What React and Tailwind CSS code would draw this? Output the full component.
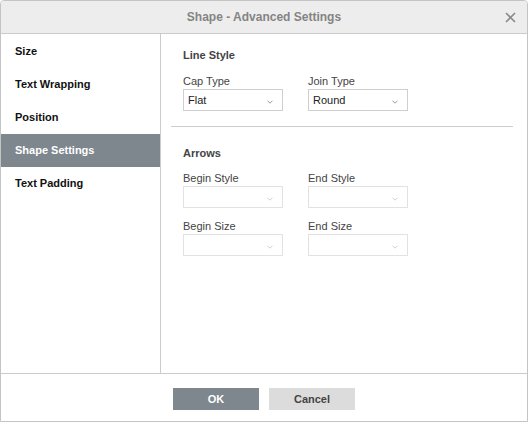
import React from "react";

const Chevron = ({ disabled }) => (
  <svg width="6" height="4" viewBox="0 0 6 4" className="absolute right-[9px] top-[10px]">
    <path d="M0.5 0.7 L3 3.2 L5.5 0.7" fill="none" stroke={disabled ? "#cfcfcf" : "#9a9a9a"} strokeWidth="1" />
  </svg>
);

const Select = ({ value, disabled }) => (
  <div
    className={`relative w-[100px] h-[22px] border bg-white pl-[4px] leading-[20px] text-[11px] ${
      disabled ? "border-[#e2e2e2]" : "border-[#cfcfcf] text-[#222]"
    }`}
  >
    {value}
    <Chevron disabled={disabled} />
  </div>
);

const Field = ({ label, value, disabled, className = "" }) => (
  <div className={`w-[100px] ${className}`}>
    <div className="h-[14px] leading-[14px] text-[11px] text-[#444] mb-[1px]">{label}</div>
    <Select value={value} disabled={disabled} />
  </div>
);

const menu = ["Size", "Text Wrapping", "Position", "Shape Settings", "Text Padding"];

export default function App() {
  return (
    <div
      className="w-[528px] h-[422px] flex flex-col border border-[#c4c4c4] rounded-t-[4px] bg-white overflow-hidden"
      style={{ fontFamily: '"Liberation Sans", Arial, sans-serif' }}
    >
      {/* header */}
      <div className="relative h-[33px] shrink-0 bg-[#ededed] border-b border-[#cbcbcb] flex items-center justify-center">
        <span className="text-[12px] font-bold text-[#848484]">Shape - Advanced Settings</span>
        <svg width="11" height="11" viewBox="0 0 11 11" className="absolute right-[11px] top-[11px]">
          <path d="M1 1 L10 10 M10 1 L1 10" stroke="#8a8a8a" strokeWidth="1.6" />
        </svg>
      </div>

      {/* body */}
      <div className="flex flex-1 min-h-0">
        <div className="w-[160px] shrink-0 border-r border-[#cbcbcb] pt-[1px]">
          {menu.map((item) => (
            <div
              key={item}
              className={`h-[33px] flex items-center pl-[14px] text-[11px] font-bold ${
                item === "Shape Settings" ? "bg-[#7e868e] text-white" : "text-[#111]"
              }`}
            >
              {item}
            </div>
          ))}
        </div>

        <div className="flex-1 pl-[10px] pr-[14px] pt-[14px]">
          <div className="pl-[12px]">
            <div className="h-[14px] leading-[14px] text-[11px] font-bold text-[#444]">Line Style</div>
            <div className="flex gap-[25px] mt-[12px]">
              <Field label="Cap Type" value="Flat" />
              <Field label="Join Type" value="Round" />
            </div>
          </div>

          <div className="mt-[15px] border-t border-[#cdcdcd]"></div>

          <div className="pl-[12px] pt-[19px]">
            <div className="h-[14px] leading-[14px] text-[11px] font-bold text-[#444]">Arrows</div>
            <div className="flex gap-[25px] mt-[11px]">
              <Field label="Begin Style" disabled />
              <Field label="End Style" disabled />
            </div>
            <div className="flex gap-[25px] mt-[11px]">
              <Field label="Begin Size" disabled />
              <Field label="End Size" disabled />
            </div>
          </div>
        </div>
      </div>

      {/* footer */}
      <div className="h-[48px] shrink-0 border-t border-[#cbcbcb] flex justify-center gap-[10px] pt-[14px]">
        <button className="w-[86px] h-[22px] bg-[#7e868e] text-white text-[11px] font-bold">OK</button>
        <button className="w-[86px] h-[22px] bg-[#dcdcdc] text-[#444] text-[11px] font-bold">Cancel</button>
      </div>
    </div>
  );
}
